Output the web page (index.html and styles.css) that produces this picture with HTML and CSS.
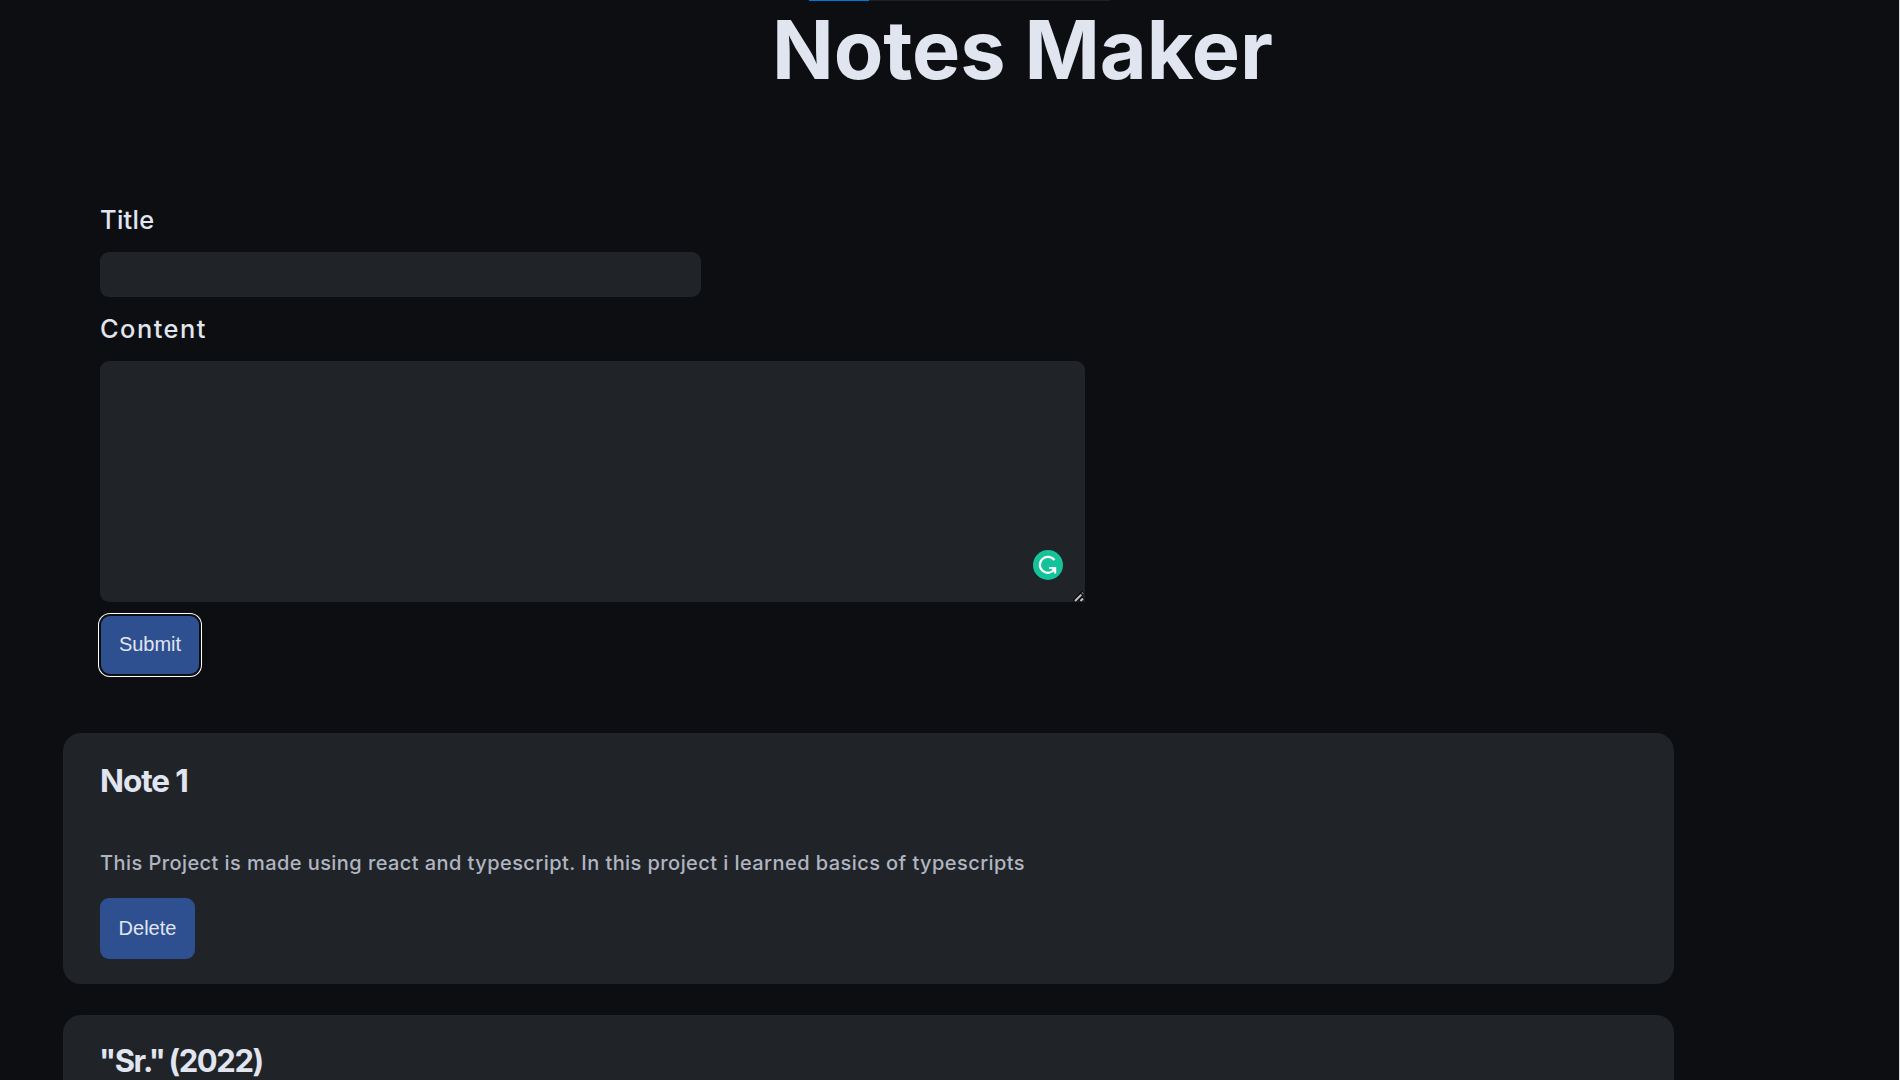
FILE: index.html
```html
<!DOCTYPE html>
<html lang="en">
<head>
<meta charset="utf-8">
<title>Notes Maker</title>
<link rel="stylesheet" href="styles.css">
</head>
<body>
<div class="loading-bar"><span class="loading-progress"></span></div>
<div class="app">
  <h1 class="page-title"><span>Notes Maker</span></h1>
  <form class="note-form">
    <label class="label label-title" for="title">Title</label>
    <input class="field title-field" id="title" type="text">
    <label class="label label-content" for="content">Content</label>
    <div class="content-wrap">
      <textarea class="field content-field" id="content"></textarea>
      <svg class="assistant-badge" viewBox="0 0 30 30" aria-hidden="true">
        <circle cx="15" cy="15" r="15" fill="#15c39a"/>
        <path d="M21.4 10.2A8 8 0 1 0 21.6 19.2" fill="none" stroke="#fff" stroke-width="2.2"/>
        <path d="M16.2 18H22.2V23.4" fill="none" stroke="#fff" stroke-width="2"/>
        <path d="M22.8 17.3V22.8L17.5 18Z" fill="#fff"/>
      </svg>
      <svg class="resize-grip" viewBox="0 0 12 12" aria-hidden="true">
        <path d="M1 11.5L10.5 2M6.5 11.5L10.5 7.5" stroke="#0d0e12" stroke-width="4"/>
        <path d="M2 11L10 3M7.5 11L10 8.5" stroke="#c4c4c4" stroke-width="2" stroke-dasharray="9 1.5 9"/>
      </svg>
    </div>
    <button class="button submit" type="button">Submit</button>
  </form>
  <main class="notes">
    <article class="note">
      <h2 class="note-title first-title">Note 1</h2>
      <p class="note-text">This Project is made using react and typescript. In this project i learned basics of typescripts</p>
      <button class="button delete" type="button">Delete</button>
    </article>
    <article class="note">
      <h2 class="note-title second-title">"Sr." (2022)</h2>
    </article>
  </main>
</div>
</body>
</html>
```
FILE: styles.css
```css
* { box-sizing: border-box; }
html, body { height: 100%; }
body {
  margin: 0;
  overflow: hidden;
  background: #0d0e12;
  color: #e1e5f0;
  font-family: Inter, "Open Sans", sans-serif;
}
.loading-bar {
  position: absolute;
  top: 0;
  left: 809px;
  width: 301px;
  height: 1px;
  background: #1f201f;
}
.loading-progress { display: block; width: 60px; height: 1px; background: #0078d7; }
.app { height: 1080px; overflow: hidden; border-right: 1px solid #d8d8d8; }
.page-title {
  margin: 0;
  height: 202px;
  padding: 0 0 0 772px;
  font-size: 81px;
  line-height: 101px;
  font-weight: 700;
  letter-spacing: -0.1px;
  white-space: nowrap;
}
.note-form { display: flex; flex-direction: column; align-items: flex-start; padding-left: 100px; }
.label { font-size: 25.4px; font-weight: 500; line-height: 36px; white-space: nowrap; }
.label-title { height: 50px; letter-spacing: 0.3px; }
.label-content { margin-top: 14px; height: 50px; letter-spacing: 1.5px; }
.field { display: block; border: 0; outline: 0; background: #202327; color: #e1e5f0; border-radius: 9px; resize: none; }
.title-field { width: 601px; height: 45px; }
.content-wrap { position: relative; }
.content-field { width: 985px; height: 241px; border-bottom-right-radius: 0; }
.assistant-badge { position: absolute; left: 933px; top: 189px; width: 30px; height: 30px; }
.resize-grip { position: absolute; right: 0; bottom: 0; width: 12px; height: 12px; }
.button {
  display: block;
  border: 0;
  padding: 0;
  background: #2e5090;
  color: #e1e5f0;
  font: 20px "Liberation Sans", Arial, sans-serif;
}
.submit {
  width: 98px;
  height: 58px;
  margin: 14px 0 0 1px;
  padding-bottom: 2px;
  border-radius: 9px;
  box-shadow: 0 0 0 2px #0d0e12, 0 0 0 3px #fff;
}
.notes { display: flex; flex-direction: column; gap: 31px; width: 1611px; margin: 59px 0 0 63px; }
.note { height: 251px; padding: 27px 37px 0; border-radius: 18px; background: #202327; }
.note-title { margin: 0; font-size: 31.5px; line-height: 41px; font-weight: 700; height: 86px; white-space: nowrap; }
.first-title { letter-spacing: -1.1px; }
.second-title { margin-left: -1px; font-size: 31px; line-height: 38px; letter-spacing: -1.4px; word-spacing: -2px; }
.note-text { margin: 0; height: 52px; color: #b0b5c1; font-size: 20px; line-height: 34px; font-weight: 500; letter-spacing: 0.43px; white-space: nowrap; }
.delete { width: 95px; height: 61px; border-radius: 9px; }
```
